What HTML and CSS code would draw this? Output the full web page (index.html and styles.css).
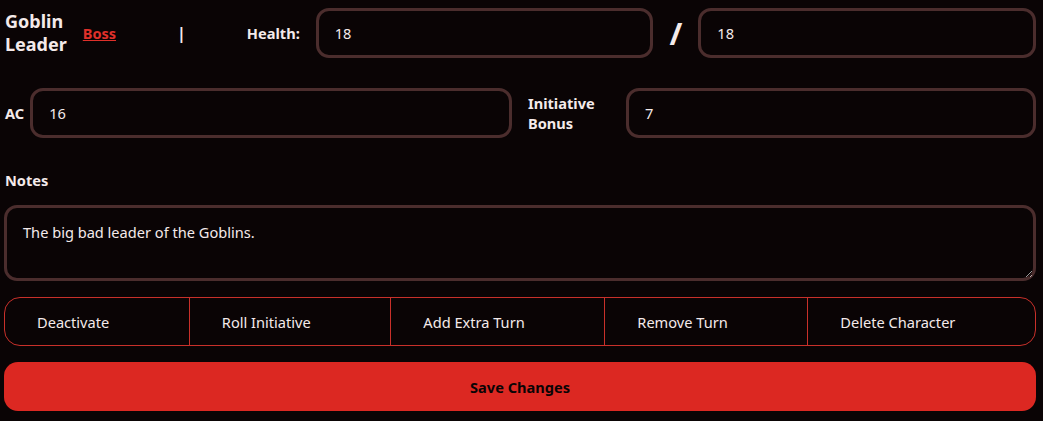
FILE: index.html
```html
<!DOCTYPE html>
<html>
<head>
<meta charset="utf-8">
<link rel="stylesheet" href="styles.css">
</head>
<body>
<div class="editor">
  <div class="row top">
    <div class="name">Goblin<br>Leader</div>
    <a class="tag" href="#">Boss</a>
    <span class="sep">|</span>
    <label class="label">Health:</label>
    <input class="field" type="text" value="18">
    <span class="slash">/</span>
    <input class="field" type="text" value="18">
  </div>
  <div class="row stats">
    <div class="pair">
      <label class="label ac">AC</label>
      <input class="field" type="text" value="16">
    </div>
    <div class="pair">
      <label class="label init">Initiative Bonus</label>
      <input class="field" type="text" value="7">
    </div>
  </div>
  <label class="label notes-label">Notes</label>
  <textarea class="notes">The big bad leader of the Goblins.</textarea>
  <div class="actions">
    <button class="action">Deactivate</button>
    <button class="action">Roll Initiative</button>
    <button class="action">Add Extra Turn</button>
    <button class="action">Remove Turn</button>
    <button class="action">Delete Character</button>
  </div>
  <button class="save">Save Changes</button>
</div>
</body>
</html>
```
FILE: styles.css
```css
html, body {
  margin: 0;
  padding: 0;
  background: #0a0405;
}
body {
  font-family: "Noto Sans", "Open Sans", sans-serif;
  color: #f4eaea;
}
.editor {
  margin: 0 7px 0 4px;
  padding-top: 8px;
}
.row {
  display: flex;
  align-items: center;
}
.top {
  gap: 16px;
}
.name {
  font-weight: 700;
  font-size: 18px;
  line-height: 23px;
  padding-left: 1px;
}
.tag {
  color: #e0302a;
  font-weight: 700;
  font-size: 14.5px;
}
.sep {
  font-weight: 700;
  font-size: 16px;
  padding: 0 45px;
}
.label {
  font-weight: 700;
  font-size: 14.6px;
  line-height: 20px;
}
.field {
  flex: 1;
  min-width: 0;
  height: 50px;
  box-sizing: border-box;
  background: #0a0405;
  border: 3px solid #4b2d2d;
  border-radius: 13px;
  color: #f4eaea;
  font-family: inherit;
  font-size: 14.6px;
  padding: 0 16px;
  outline: none;
}
.slash {
  font-weight: 700;
  font-size: 31px;
  line-height: 1;
}
.stats {
  margin-top: 30px;
  gap: 16px;
}
.pair {
  flex: 1;
  display: flex;
  align-items: center;
  gap: 6px;
}
.ac {
  padding-left: 1px;
}
.init {
  width: 92px;
  flex: none;
}
.notes-label {
  display: block;
  margin-top: 32px;
  padding-left: 1px;
}
.notes {
  display: block;
  width: 100%;
  height: 76px;
  box-sizing: border-box;
  margin-top: 15px;
  background: #0a0405;
  border: 3px solid #4b2d2d;
  border-radius: 13px;
  color: #f4eaea;
  font-family: inherit;
  font-size: 14.6px;
  line-height: 20px;
  padding: 14px 16px;
  resize: vertical;
  outline: none;
}
.actions {
  display: flex;
  box-sizing: border-box;
  margin-top: 16px;
  height: 49px;
  border: 1px solid #c8302a;
  border-radius: 16px;
  overflow: hidden;
}
.action {
  flex: 1 1 auto;
  background: transparent;
  border: 0;
  border-left: 1px solid #c8302a;
  color: #f4eaea;
  font-family: inherit;
  font-size: 14.6px;
  text-align: left;
  padding: 0 32px;
}
.action:first-child {
  border-left: 0;
}
.save {
  display: block;
  width: 100%;
  height: 49px;
  margin-top: 16px;
  background: #dc2822;
  border: 0;
  border-radius: 14px;
  color: #0a0405;
  font-family: inherit;
  font-weight: 700;
  font-size: 14.6px;
}
```
